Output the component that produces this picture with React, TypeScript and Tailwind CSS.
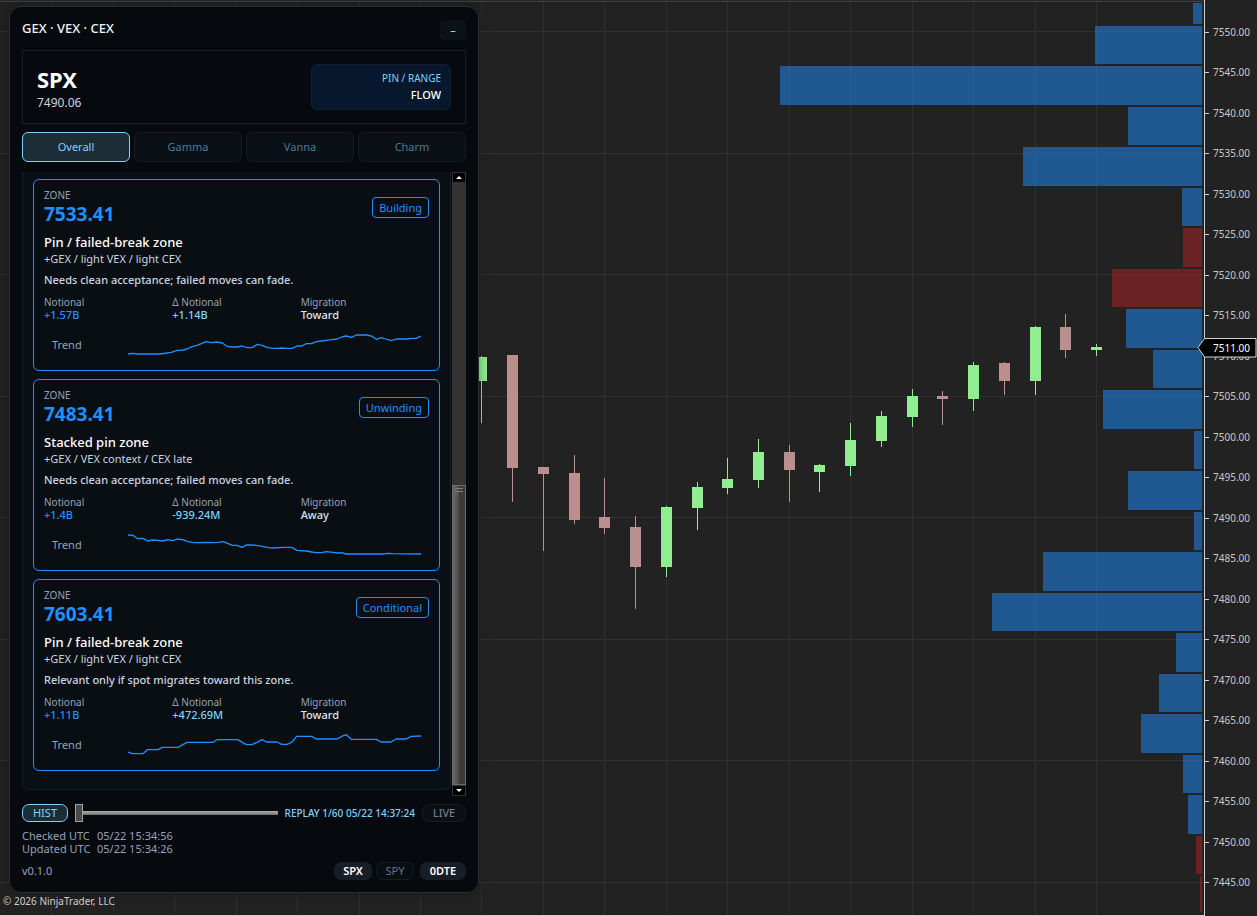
import React from 'react';

interface Candle {
  x: number;
  high: number;
  low: number;
  top: number;
  bottom: number;
  up: boolean;
}

interface ProfileBar {
  x: number;
  top: number;
  bottom: number;
  negative?: boolean;
}

interface Zone {
  level: string;
  status: string;
  title: string;
  mix: string;
  note: string;
  notional: string;
  delta: string;
  migration: string;
  trend: string;
}

const verticalGrid = [51, 113, 174, 236, 297, 359, 420, 481, 543, 604, 666, 727, 789, 850, 912, 973, 1035, 1096];
const horizontalGrid = [31, 153, 274, 396, 517, 639, 760, 882];

const candles: Candle[] = [
  { x: 481, high: 356, low: 423, top: 357, bottom: 381, up: true },
  { x: 512, high: 355, low: 502, top: 355, bottom: 468, up: false },
  { x: 543, high: 467, low: 551, top: 467, bottom: 474, up: false },
  { x: 574, high: 455, low: 524, top: 473, bottom: 520, up: false },
  { x: 604, high: 478, low: 534, top: 517, bottom: 528, up: false },
  { x: 635, high: 516, low: 609, top: 527, bottom: 567, up: false },
  { x: 666, high: 506, low: 577, top: 507, bottom: 567, up: true },
  { x: 697, high: 482, low: 530, top: 487, bottom: 508, up: true },
  { x: 727, high: 458, low: 494, top: 479, bottom: 488, up: true },
  { x: 758, high: 439, low: 488, top: 452, bottom: 480, up: true },
  { x: 789, high: 445, low: 502, top: 452, bottom: 470, up: false },
  { x: 819, high: 464, low: 492, top: 465, bottom: 472, up: true },
  { x: 850, high: 423, low: 476, top: 440, bottom: 466, up: true },
  { x: 881, high: 411, low: 447, top: 416, bottom: 441, up: true },
  { x: 912, high: 389, low: 427, top: 396, bottom: 417, up: true },
  { x: 942, high: 391, low: 425, top: 396, bottom: 399, up: false },
  { x: 973, high: 362, low: 411, top: 365, bottom: 399, up: true },
  { x: 1004, high: 362, low: 395, top: 363, bottom: 381, up: false },
  { x: 1035, high: 326, low: 395, top: 327, bottom: 381, up: true },
  { x: 1065, high: 314, low: 358, top: 327, bottom: 350, up: false },
  { x: 1096, high: 344, low: 356, top: 347, bottom: 350, up: true },
];

const profile: ProfileBar[] = [
  { x: 1193, top: 3, bottom: 24 },
  { x: 1095, top: 26, bottom: 64 },
  { x: 780, top: 66, bottom: 105 },
  { x: 1128, top: 107, bottom: 145 },
  { x: 1023, top: 147, bottom: 186 },
  { x: 1182, top: 188, bottom: 226 },
  { x: 1183, top: 228, bottom: 267, negative: true },
  { x: 1112, top: 269, bottom: 307, negative: true },
  { x: 1126, top: 309, bottom: 348 },
  { x: 1153, top: 350, bottom: 388 },
  { x: 1103, top: 390, bottom: 429 },
  { x: 1194, top: 431, bottom: 469 },
  { x: 1128, top: 471, bottom: 510 },
  { x: 1194, top: 512, bottom: 550 },
  { x: 1043, top: 552, bottom: 591 },
  { x: 992, top: 593, bottom: 631 },
  { x: 1176, top: 633, bottom: 672 },
  { x: 1159, top: 674, bottom: 712 },
  { x: 1141, top: 714, bottom: 753 },
  { x: 1183, top: 755, bottom: 793 },
  { x: 1188, top: 795, bottom: 834 },
  { x: 1196, top: 836, bottom: 874, negative: true },
  { x: 1200, top: 876, bottom: 912, negative: true },
];

const priceLabels = Array.from({ length: 22 }, (_, i) => (7550 - i * 5).toFixed(2));

const zones: Zone[] = [
  {
    level: '7533.41',
    status: 'Building',
    title: 'Pin / failed-break zone',
    mix: '+GEX / light VEX / light CEX',
    note: 'Needs clean acceptance; failed moves can fade.',
    notional: '+1.57B',
    delta: '+1.14B',
    migration: 'Toward',
    trend:
      '0,69 15,67 27,69 95,69 130,64 147,58 165,57 177,54 192,47 207,43 235,32 251,35 267,33 283,36 297,46 313,48 327,48 342,45 357,50 372,50 388,40 403,43 418,50 435,52 447,52 462,51 477,52 493,52 507,45 521,45 535,38 551,38 565,32 581,30 595,28 611,26 627,24 641,18 655,15 671,19 685,12 715,12 730,15 745,25 760,20 773,24 789,29 805,24 835,24 850,22 865,22 879,15',
  },
  {
    level: '7483.41',
    status: 'Unwinding',
    title: 'Stacked pin zone',
    mix: '+GEX / VEX context / CEX late',
    note: 'Needs clean acceptance; failed moves can fade.',
    notional: '+1.4B',
    delta: '-939.24M',
    migration: 'Away',
    trend:
      '0,12 15,13 29,23 45,22 59,30 75,27 90,28 103,30 120,26 135,29 148,24 163,26 180,32 193,34 207,35 235,34 255,35 270,34 285,32 299,37 313,43 327,43 342,49 355,42 372,42 390,44 405,47 421,50 435,51 465,49 491,49 507,58 535,60 551,63 565,65 581,65 595,62 615,64 630,66 640,65 655,69 765,69 780,67 795,68 879,69',
  },
  {
    level: '7603.41',
    status: 'Conditional',
    title: 'Pin / failed-break zone',
    mix: '+GEX / light VEX / light CEX',
    note: 'Relevant only if spot migrates toward this zone.',
    notional: '+1.11B',
    delta: '+472.69M',
    migration: 'Toward',
    trend:
      '0,63 13,68 45,68 58,56 90,56 103,49 150,49 177,34 255,34 267,26 329,26 343,34 355,41 372,41 387,34 402,26 415,33 447,33 461,40 478,40 492,33 506,16 551,16 565,24 627,24 641,16 655,11 670,25 745,25 759,33 789,33 804,24 835,24 850,16 879,15',
  },
];

const PriceChart: React.FC = () => (
  <svg
    viewBox="0 0 1204 916"
    preserveAspectRatio="none"
    shapeRendering="crispEdges"
    className="block h-full min-w-0 flex-1"
    role="img"
    aria-label="Price chart with volume profile"
  >
    <rect x="0" y="0" width="1204" height="1" fill="#29292b" />
    <rect x="0" y="1" width="1204" height="1" fill="#3e3e42" />
    {verticalGrid.map((x) => (
      <rect key={x} x={x} y="2" width="1" height="911" fill="#303030" />
    ))}
    {horizontalGrid.map((y) => (
      <rect key={y} x="0" y={y} width="1203" height="1" fill="#303030" />
    ))}
    {profile.map((bar) => (
      <rect
        key={bar.top}
        x={bar.x}
        y={bar.top}
        width={1202 - bar.x}
        height={bar.bottom - bar.top}
        fill={bar.negative ? '#b22222' : '#1e90ff'}
        fillOpacity="0.5"
      />
    ))}
    {candles.map((c) => (
      <g key={c.x} fill={c.up ? '#90ee90' : '#bc8f8f'}>
        <rect x={c.x} y={c.high} width="1" height={c.low - c.high} />
        <rect x={c.x - 5} y={c.top} width="11" height={c.bottom - c.top} />
      </g>
    ))}
    <rect x="0" y="915" width="1204" height="1" fill="#cfcfcf" />
  </svg>
);

const PriceAxis: React.FC = () => (
  <div className="relative flex h-full w-[53px] flex-col border-l border-[#cfcfcf] pt-6 pb-[25px] text-[10px] text-[#c8c8c8]">
    <ul className="flex flex-1 flex-col justify-between">
      {priceLabels.map((label) => (
        <li key={label} className="flex h-4 items-center gap-1">
          <span className="h-px w-1 bg-[#cfcfcf]" />
          {label}
        </li>
      ))}
    </ul>
    <div className="absolute top-[338px] -left-2 h-5 w-[60px]">
      <svg viewBox="0 0 60 20" className="absolute inset-0 h-full w-full">
        <path d="M1 9.5 L7.5 0.5 H59 V19 H7.5 Z" fill="#000" stroke="#cfd4d2" />
      </svg>
      <span className="relative block pl-4 leading-5 text-white">7511.00</span>
    </div>
  </div>
);

const ZoneCard: React.FC<{ zone: Zone }> = ({ zone }) => (
  <article className="rounded-md border border-[#1e90ff] bg-[#090e12] px-2.5 pt-2 pb-[11px]">
    <div className="flex items-center justify-between">
      <div>
        <p className="text-[10px] leading-[14px] text-[#94a3b8]">ZONE</p>
        <p className="text-[19px] leading-6 font-bold text-[#1e90ff]">{zone.level}</p>
      </div>
      <span className="rounded border border-[#1e90ff] px-1.5 text-[11px] leading-[19px] text-[#1e90ff]">
        {zone.status}
      </span>
    </div>
    <h3 className="mt-2 text-[13px] leading-4 font-medium text-white">{zone.title}</h3>
    <p className="text-[11px] leading-[18px] text-[#cbd5e1]">{zone.mix}</p>
    <p className="mt-1 text-[11px] leading-4 font-medium text-[#cbd5e1]">{zone.note}</p>
    <dl className="mt-2 grid grid-cols-3 text-[11px] leading-[14px] font-medium">
      <div>
        <dt className="text-[10px] leading-3 font-normal text-[#94a3b8]">Notional</dt>
        <dd className="text-[#1e90ff]">{zone.notional}</dd>
      </div>
      <div>
        <dt className="text-[10px] leading-3 font-normal text-[#94a3b8]">Δ Notional</dt>
        <dd className="text-[#7dd3fc]">{zone.delta}</dd>
      </div>
      <div>
        <dt className="text-[10px] leading-3 font-normal text-[#94a3b8]">Migration</dt>
        <dd className="text-[#dbe4ee]">{zone.migration}</dd>
      </div>
    </dl>
    <div className="mt-[9px] flex items-center px-2">
      <span className="w-[76px] text-[11px] text-[#94a3b8]">Trend</span>
      <svg viewBox="0 0 879 84" preserveAspectRatio="none" className="h-7 min-w-0 flex-1">
        <polyline
          points={zone.trend}
          fill="none"
          stroke="#1e90ff"
          strokeWidth="1.3"
          strokeLinejoin="round"
          vectorEffect="non-scaling-stroke"
        />
      </svg>
    </div>
  </article>
);

const ScrollRail: React.FC = () => (
  <div className="mb-px flex w-3.5 flex-col bg-[#333333]">
    <button type="button" aria-label="Scroll up" className="flex h-[11px] items-center justify-center border border-[#333333] bg-black">
      <svg viewBox="0 0 6 3" className="h-[3px] w-1.5">
        <path d="M0 3 L3 0 L6 3 Z" fill="#fff" />
      </svg>
    </button>
    <div className="flex flex-1 flex-col justify-end">
      <div className="flex h-[300px] justify-center border border-[#6b6b6b] bg-linear-to-r from-[#6a6a6a] from-0% via-[#4a4a4a] via-50% to-[#3a3a3a] to-50% pt-[2px]">
        <span className="h-1 w-2 border-y border-[#808080]" />
      </div>
    </div>
    <button type="button" aria-label="Scroll down" className="flex h-[11px] items-center justify-center border border-[#333333] bg-black">
      <svg viewBox="0 0 6 3" className="h-[3px] w-1.5">
        <path d="M0 0 L3 3 L6 0 Z" fill="#fff" />
      </svg>
    </button>
  </div>
);

const tabs = ['Overall', 'Gamma', 'Vanna', 'Charm'];

const ExposurePanel: React.FC = () => (
  <section className="absolute top-1.5 left-[9px] w-[470px] rounded-xl border border-[#2a2d31] bg-[#06090e] px-3 pt-[13px] pb-3 shadow-[0_0_12px_rgba(0,0,0,0.35)]">
    <header className="flex h-5 items-start justify-between">
      <h1 className="text-[13px] leading-4 font-medium text-[#f1f5f9]">GEX · VEX · CEX</h1>
      <button type="button" aria-label="Minimize" className="h-5 w-[26px] rounded bg-[#0b1218] text-[11px] leading-5 text-[#cbd5e1]">
        –
      </button>
    </header>

    <div className="mt-2.5 flex items-center justify-between border border-[#1c2025] px-3.5 py-3">
      <div>
        <p className="text-[22px] leading-8 font-bold text-white">SPX</p>
        <p className="text-[12px] leading-4 text-[#cbd5e1]">7490.06</p>
      </div>
      <div className="w-[140px] rounded-md border border-[#151f2b] bg-[#07172d] px-[9px] pt-[5px] pb-1.5 text-right">
        <p className="text-[10px] leading-4 text-[#7dd3fc]">PIN / RANGE</p>
        <p className="text-[11px] leading-[17px] font-medium text-white">FLOW</p>
      </div>
    </div>

    <nav className="mt-2 grid grid-cols-4 gap-1">
      {tabs.map((tab, i) => (
        <button
          key={tab}
          type="button"
          className={
            i === 0
              ? 'h-[30px] rounded-md border border-[#7dd3fc] bg-[#1d2d37] text-[11px] text-[#7dd3fc]'
              : 'h-[30px] rounded-md border border-[#151c22] bg-[#0a1016] text-[11px] text-[#4b7a94]'
          }
        >
          {tab}
        </button>
      ))}
    </nav>

    <div className="mt-2.5 flex gap-px">
      <div className="mb-[7px] flex flex-1 flex-col gap-2 rounded-b-md border border-t-0 border-[#171d23] bg-[#091015] px-2.5 pt-[7px] pb-[18px]">
        {zones.map((zone) => (
          <ZoneCard key={zone.level} zone={zone} />
        ))}
      </div>
      <ScrollRail />
    </div>

    <div className="mt-[7px] flex h-[18px] items-center text-[11px]">
      <button type="button" className="h-[18px] w-[46px] rounded-[7px] border border-[#7dd3fc] bg-[#1d2d37] leading-4 text-[#7dd3fc]">
        HIST
      </button>
      <input
        type="range"
        min={1}
        max={60}
        defaultValue={1}
        aria-label="Replay position"
        className="mr-[7px] ml-[7px] h-[18px] min-w-0 flex-1 appearance-none bg-transparent [&::-webkit-slider-runnable-track]:h-1 [&::-webkit-slider-runnable-track]:bg-linear-to-b [&::-webkit-slider-runnable-track]:from-[#b0b0b0] [&::-webkit-slider-runnable-track]:to-[#707070] [&::-webkit-slider-thumb]:-mt-[7px] [&::-webkit-slider-thumb]:h-[18px] [&::-webkit-slider-thumb]:w-2 [&::-webkit-slider-thumb]:appearance-none [&::-webkit-slider-thumb]:border [&::-webkit-slider-thumb]:border-[#a0a0a0] [&::-webkit-slider-thumb]:bg-[#4a4a4a]"
      />
      <span className="mr-[7px] text-[10px] font-medium text-[#7dd3fc]">REPLAY 1/60 05/22 14:37:24</span>
      <button type="button" className="h-[18px] w-11 rounded-[7px] border border-[#151c22] bg-[#0a1016] leading-4 text-[#7c8a99]">
        LIVE
      </button>
    </div>

    <dl className="mt-[7px] grid grid-cols-[75px_1fr] text-[11px] leading-[13px] text-[#94a3b8]">
      <dt>Checked UTC</dt>
      <dd>05/22 15:34:56</dd>
      <dt>Updated UTC</dt>
      <dd>05/22 15:34:26</dd>
    </dl>

    <footer className="mt-[7px] flex h-[18px] items-center text-[11px]">
      <span className="flex-1 text-[#94a3b8]">v0.1.0</span>
      <button type="button" className="h-[18px] w-[38px] rounded-[7px] bg-[#171e26] leading-[18px] font-semibold text-white">
        SPX
      </button>
      <button type="button" className="ml-1 h-[18px] w-[38px] rounded-[7px] border border-[#151c22] bg-[#090e13] leading-4 text-[#64748b]">
        SPY
      </button>
      <button type="button" className="ml-1.5 h-[18px] w-[46px] rounded-[7px] bg-[#171e26] leading-[18px] font-semibold text-white">
        0DTE
      </button>
    </footer>
  </section>
);

const App: React.FC = () => {
  return (
    <main className="relative flex h-screen min-h-[916px] overflow-hidden bg-[#222222] font-['Noto_Sans','Open_Sans',sans-serif]">
      <PriceChart />
      <PriceAxis />
      <ExposurePanel />
      <p className="absolute bottom-[7px] left-[3px] text-[10px] leading-4 text-[#cccccc]">© 2026 NinjaTrader, LLC</p>
    </main>
  );
};

export default App;
